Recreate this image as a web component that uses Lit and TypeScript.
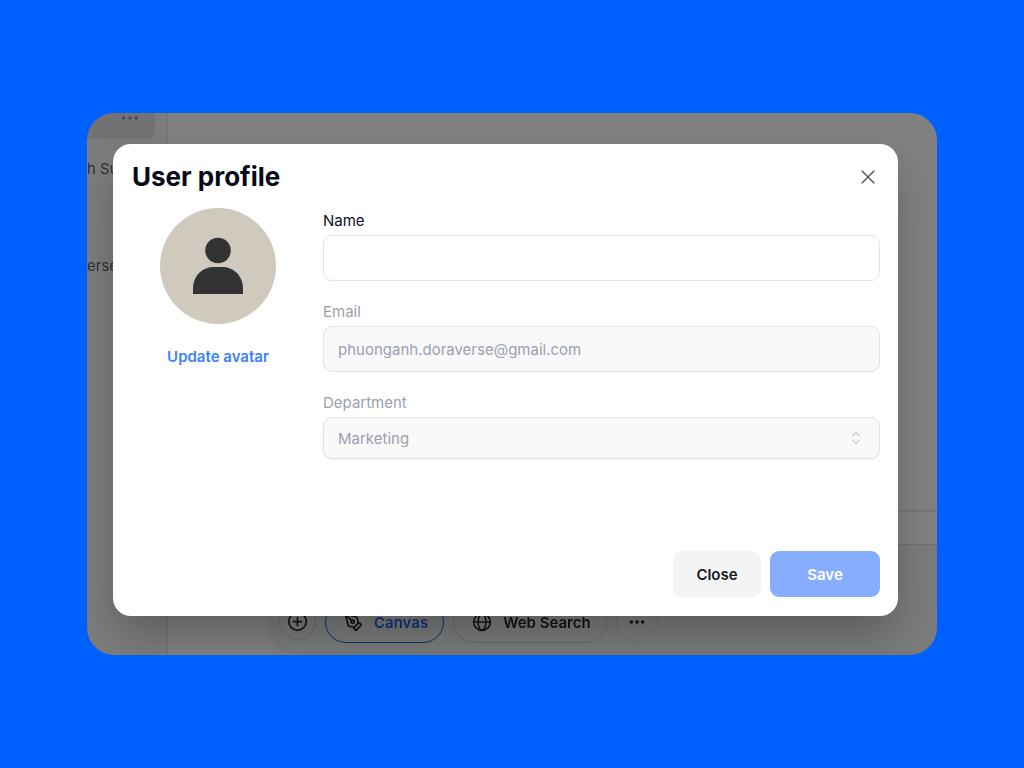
import { LitElement, html, css, svg } from "lit";
import { customElement, state } from "lit/decorators.js";

const stroke = (size: number, width: number, body: unknown) => html`
  <svg width=${size} height=${size} viewBox="0 0 24 24" fill="none" stroke="currentColor"
    stroke-width=${width} stroke-linecap="round" stroke-linejoin="round" aria-hidden="true">${body}</svg>
`;

const plusCircle = svg`<circle cx="12" cy="12" r="10"/><path d="M7.500 12h9M12 7.500v9"/>`;
const penTool = svg`<path d="M15.707 21.293a1 1 0 0 1-1.414 0l-1.586-1.586a1 1 0 0 1 0-1.414l5.586-5.586a1 1 0 0 1 1.414 0l1.586 1.586a1 1 0 0 1 0 1.414z"/><path d="m18 13-1.375-6.874a1 1 0 0 0-.746-.776L3.235 2.028a1 1 0 0 0-1.207 1.207L5.350 15.879a1 1 0 0 0 .776.746L13 18"/><path d="m2.300 2.300 7.286 7.286"/><circle cx="11" cy="11" r="2"/>`;
const globe = svg`<circle cx="12" cy="12" r="10"/><ellipse cx="12" cy="12" rx="4.600" ry="10"/><path d="M2 12h20"/>`;
const dots = svg`<circle cx="3.500" cy="12" r="1.200"/><circle cx="12" cy="12" r="1.200"/><circle cx="20.500" cy="12" r="1.200"/>`;
const cross = svg`<path d="M4 4l16 16M20 4L4 20"/>`;

@customElement("chat-backdrop")
export class ChatBackdrop extends LitElement {
  static styles = css`
    :host { display: flex; font-family: Inter, "Liberation Sans", sans-serif; font-size: 15px; color: #16181d; background: #fff; filter: brightness(.5); }
    * { box-sizing: border-box; }
    .sidebar { flex: 0 0 81px; border-right: 1px solid #e4e4e4; background: #f5f9f7; overflow: hidden; white-space: nowrap; }
    .current { height: 26px; margin-right: 12px; background: #e4e4e8; border-radius: 0 0 8px 0; display: flex; justify-content: flex-end; padding: 0 16px; color: #8a90a0; }
    .current svg { margin-top: -4px; }
    .chat { line-height: 24px; margin-top: 18px; color: #5c5f65; }
    .chat + .chat { margin-top: 73px; }
    .main { flex: 1; min-width: 0; display: flex; flex-direction: column; justify-content: flex-end; padding-bottom: 3px; overflow: hidden; }
    .outer { border-top: 2px solid #ececec; padding-top: 32px; margin-left: 101px; border-radius: 28px 0 0 28px; box-shadow: 0 2px 4px rgba(0, 0, 0, .1); }
    .composer { border-top: 1px solid #dbe0de; background: #f3f7f5; height: 108px; border-radius: 0 0 0 26px; padding: 0 10px 9px; display: flex; align-items: flex-end; gap: 9px; }
    button { font: inherit; font-weight: 600; color: #26282d; background: transparent; border: 1px solid #d2d6d4; border-radius: 21px; height: 42px; padding: 0; display: flex; align-items: center; justify-content: center; flex: none; }
    .add { width: 37px; height: 37px; margin-bottom: 3px; }
    .pill { padding: 0 15px 0 18px; gap: 11px; }
    .canvas { color: #2c68f0; border-color: #2563eb; }
    .canvas svg { color: #16181d; }
    .more { width: 42px; border-color: #e2e6e4; }
  `;

  render() {
    return html`
      <nav class="sidebar">
        <div class="current">${stroke(18, 2, dots)}</div>
        <div class="chat">h Su</div>
        <div class="chat">erse</div>
      </nav>
      <div class="main">
        <div class="outer">
          <div class="composer">
            <button class="add" aria-label="Add">${stroke(21, 2, plusCircle)}</button>
            <button class="pill canvas">${stroke(19, 2, penTool)}Canvas</button>
            <button class="pill">${stroke(20, 2, globe)}Web Search</button>
            <button class="more" aria-label="More">${stroke(16, 3, dots)}</button>
          </div>
        </div>
      </div>
    `;
  }
}

@customElement("profile-dialog")
export class ProfileDialog extends LitElement {
  static styles = css`
    :host { display: flex; flex-direction: column; padding: 17px 18px 19px 19px; background: #fff; border-radius: 18px; box-shadow: 0 22px 44px -6px rgba(0, 0, 0, .28); font-family: Inter, "Liberation Sans", sans-serif; font-size: 15px; color: #0b0f1a; }
    * { box-sizing: border-box; }
    header { display: flex; align-items: center; justify-content: space-between; }
    h1 { margin: 0; font-size: 26px; line-height: 32px; font-weight: 700; color: #060a18; }
    button { font: inherit; border: 0; padding: 0; background: none; cursor: pointer; }
    .dismiss { width: 24px; height: 24px; display: grid; place-items: center; color: #5a5a5a; }
    .body { flex: 1; display: flex; gap: 19px; padding-top: 15px; }
    .identity { flex: 0 0 172px; display: flex; flex-direction: column; align-items: center; gap: 21px; }
    .avatar { width: 116px; height: 116px; border-radius: 50%; background: #cfcabd; }
    .update { color: #3b82f6; font-weight: 600; line-height: 24px; }
    .fields { flex: 1; min-width: 0; display: flex; flex-direction: column; gap: 20px; padding-top: 2px; }
    .field { display: flex; flex-direction: column; gap: 3px; }
    label { line-height: 22px; }
    .off label { color: #9c9fae; }
    input, select { width: 100%; height: 46px; font: inherit; color: #0b0f1a; border: 1px solid #e3e3e3; border-radius: 9px; background: #fff; padding: 0 14px; appearance: none; outline: none; opacity: 1; }
    input:disabled, select:disabled { background: #f9f9f9; color: #9c9fae; opacity: 1; }
    .picker { display: grid; align-items: center; }
    .picker > * { grid-area: 1 / 1; }
    select { height: 42px; box-shadow: 0 1px 2px rgba(0, 0, 0, .06); }
    .picker svg { justify-self: end; margin-right: 18px; color: #c9c9cd; }
    footer { display: flex; justify-content: flex-end; gap: 9px; }
    footer button { height: 46px; border-radius: 9px; font-weight: 600; }
    .close { width: 88px; background: #f4f4f4; color: #16181d; }
    .save { width: 110px; background: #86adff; color: #fff; }
  `;

  @state() private name = "";

  render() {
    return html`
      <header>
        <h1>User profile</h1>
        <button class="dismiss" aria-label="Dismiss">${stroke(18, 2, cross)}</button>
      </header>
      <div class="body">
        <div class="identity">
          <svg class="avatar" viewBox="0 0 116 116" fill="#333" aria-hidden="true">
            <circle cx="58" cy="42.500" r="12.800" />
            <path d="M33 86V81C33 67 43 59 54 59h8c11 0 21 8 21 22v5z" />
          </svg>
          <button class="update">Update avatar</button>
        </div>
        <div class="fields">
          <div class="field">
            <label for="name">Name</label>
            <input id="name" .value=${this.name}
              @input=${(e: Event) => { this.name = (e.target as HTMLInputElement).value; }} />
          </div>
          <div class="field off">
            <label for="email">Email</label>
            <input id="email" type="email" value="phuonganh.doraverse@gmail.com" disabled />
          </div>
          <div class="field off">
            <label for="department">Department</label>
            <div class="picker">
              <select id="department" disabled><option>Marketing</option></select>
              <svg width="12" height="14" viewBox="0 0 12 14" fill="none" stroke="currentColor"
                stroke-width="1.200" aria-hidden="true"><path d="M2.500 5 6 1.500 9.500 5M2.500 9 6 12.500 9.500 9" /></svg>
            </div>
          </div>
        </div>
      </div>
      <footer>
        <button class="close">Close</button>
        <button class="save">Save</button>
      </footer>
    `;
  }
}

@customElement("app-root")
export class AppRoot extends LitElement {
  static styles = css`
    :host { display: flex; box-sizing: border-box; min-height: 100vh; padding: 113px 87px; background: #0060ff; }
    .window { flex: 1; min-width: 0; display: grid; grid-template: minmax(0, 1fr) / minmax(0, 1fr); border-radius: 27px; overflow: hidden; }
    .window > * { grid-area: 1 / 1; }
    .overlay { z-index: 1; display: flex; padding: 31px 39px 39px 26px; }
    profile-dialog { flex: 1; min-width: 0; }
  `;

  render() {
    return html`
      <div class="window">
        <chat-backdrop></chat-backdrop>
        <div class="overlay"><profile-dialog role="dialog" aria-label="User profile"></profile-dialog></div>
      </div>
    `;
  }
}
